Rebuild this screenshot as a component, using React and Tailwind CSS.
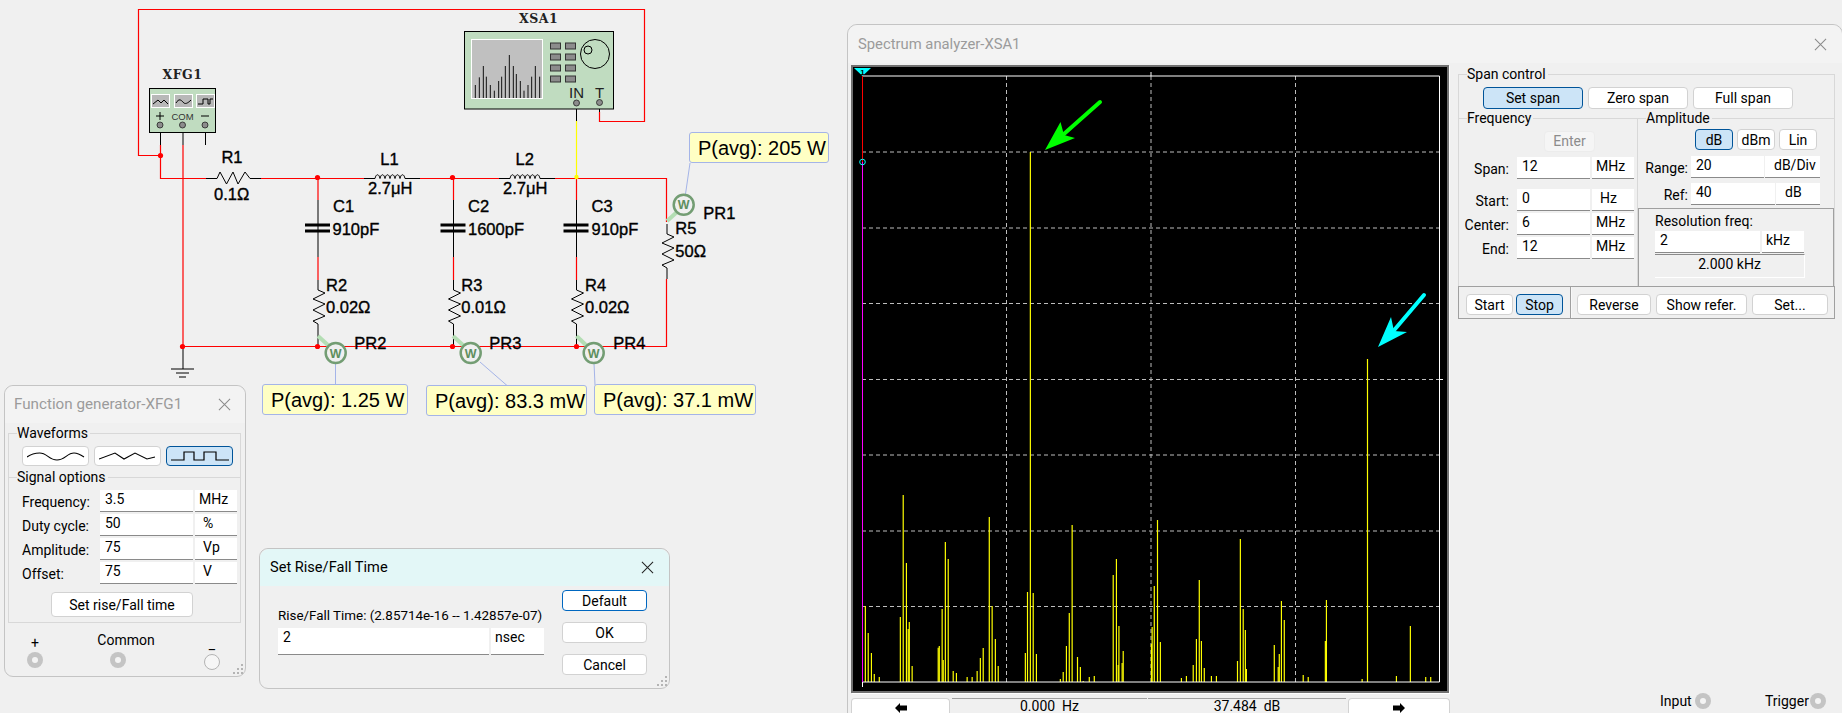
import React from "react";

function Close({ className }) {
  return (
    <svg viewBox="0 0 14 14" className={className} fill="none" stroke="currentColor" strokeWidth="1.1">
      <path d="M1 1L13 13M13 1L1 13" />
    </svg>
  );
}

function Grip() {
  return (
    <svg viewBox="0 0 11 11" className="absolute right-[1px] bottom-[1px] w-[11px] h-[11px]" fill="#b4b4b4">
      <rect x="8" y="0" width="2" height="2" />
      <rect x="4" y="4" width="2" height="2" />
      <rect x="8" y="4" width="2" height="2" />
      <rect x="0" y="8" width="2" height="2" />
      <rect x="4" y="8" width="2" height="2" />
      <rect x="8" y="8" width="2" height="2" />
    </svg>
  );
}

function Btn({ className, active, focus, children }) {
  const tone = active
    ? "bg-[#cce4f7] border-[#005499]"
    : focus
    ? "bg-white border-[#0067c0]"
    : "bg-white border-[#d2d2d2]";
  return (
    <div className={`flex items-center justify-center rounded-[4px] border text-[14px] leading-none text-black ${tone} ${className}`}>
      {children}
    </div>
  );
}

function Box({ className, children }) {
  return (
    <div className={`h-[22px] bg-white border-b border-[#8a8a8a] text-[14px] leading-[18px] text-black ${className}`}>
      {children}
    </div>
  );
}

function Legend({ className, children }) {
  return (
    <span className={`absolute -top-[9px] bg-[#f0f0f0] pr-[2px] text-[14px] leading-[17px] text-black ${className}`}>
      {children}
    </span>
  );
}

function Row({ label, value, unit, labelClass, inputClass, unitClass, unitPad = "pl-[4px]", gap = "gap-[2px]", rowClass = "" }) {
  return (
    <div className={`flex items-center ${gap} ${rowClass}`}>
      <span className={`pt-[2px] text-[14px] leading-none text-black ${labelClass}`}>{label}</span>
      <Box className={`pl-[5px] ${inputClass}`}>{value}</Box>
      <Box className={`${unitPad} ${unitClass}`}>{unit}</Box>
    </div>
  );
}

function Jack({ className = "" }) {
  return (
    <div className={`flex items-center justify-center w-[16px] h-[16px] rounded-full bg-[#c4c4c4] ${className}`}>
      <div className="w-[6px] h-[6px] rounded-full bg-[#f4f4f4]" />
    </div>
  );
}

function FunctionGenerator() {
  const rows = [
    ["Frequency:", "3.5", "MHz", "pl-[4px]"],
    ["Duty cycle:", "50", "%", "pl-[8px]"],
    ["Amplitude:", "75", "Vp", "pl-[8px]"],
    ["Offset:", "75", "V", "pl-[8px]"],
  ];
  return (
    <div className="absolute left-[4px] top-[385px] w-[242px] h-[292px] rounded-[9px] border border-[#c4c4c4] bg-[#f0f0f0]">
      <div className="flex items-center justify-between h-[37px] pl-[9px] pr-[14px] rounded-t-[9px] bg-[#f3f3f3]">
        <span className="text-[15.2px] text-[#9b9b9b]">Function generator-XFG1</span>
        <Close className="w-[13px] h-[13px] text-[#8a8a8a]" />
      </div>
      <div className="relative mt-[10px] ml-[3px] w-[233px] h-[190px] border border-[#d8d8d8]">
        <Legend className="left-[8px]">Waveforms</Legend>
        <div className="flex gap-[5px] pt-[12px] pl-[13px]">
          <Btn className="w-[67px] h-[20px]">
            <svg viewBox="0 0 58 12" className="w-[58px] h-[12px]" fill="none" stroke="#000" strokeWidth="1.1">
              <path d="M0 7C4 4 8 3 12.7 3C20 3 22 10 30 10C38 10 40 3 47 3C51 3 54 5 57 7" />
            </svg>
          </Btn>
          <Btn className="w-[67px] h-[20px]">
            <svg viewBox="0 0 58 12" className="w-[58px] h-[12px]" fill="none" stroke="#000" strokeWidth="1.1">
              <path d="M0 9L16 3L25 9L36 3L48 9L56 7" />
            </svg>
          </Btn>
          <Btn active className="w-[67px] h-[20px]">
            <svg viewBox="0 0 58 12" className="w-[58px] h-[12px]" fill="none" stroke="#000" strokeWidth="1.2">
              <path d="M0 10H13V2H23V10H33V2H45V10H58" />
            </svg>
          </Btn>
        </div>
        <div className="relative mt-[11px] border-t border-[#d8d8d8]">
          <Legend className="left-[8px]">Signal options</Legend>
        </div>
        <div className="flex flex-col gap-[2px] mt-[12px]">
          {rows.map(([l, v, u, p]) => (
            <Row key={l} label={l} value={v} unit={u} unitPad={p} labelClass="w-[89px] pl-[13px]" inputClass="w-[93px]" unitClass="w-[42px]" />
          ))}
        </div>
        <Btn className="ml-[42px] mt-[8px] w-[142px] h-[25px]">Set rise/Fall time</Btn>
      </div>
      <div className="flex items-start">
        <div className="flex flex-col items-center ml-[22px] w-[16px] pt-[11px]">
          <span className="text-[14px] leading-[18px] text-black">+</span>
          <Jack />
        </div>
        <div className="flex flex-col items-center ml-[67px] w-[16px] pt-[6px]">
          <span className="text-[14px] leading-[23px] pl-[16px] text-black whitespace-nowrap">Common</span>
          <Jack />
        </div>
        <div className="flex flex-col items-center ml-[78px] w-[16px] pt-[11px]">
          <span className="text-[14px] leading-[20px] text-black">_</span>
          <div className="w-[16px] h-[16px] rounded-full border border-[#b4b4b4] bg-[#f6f6f6]" />
        </div>
      </div>
      <Grip />
    </div>
  );
}

function RiseFall() {
  return (
    <div className="absolute left-[259px] top-[548px] w-[411px] h-[141px] rounded-[9px] border border-[#c4c4c4] bg-[#f0f0f0]">
      <div className="flex items-center justify-between h-[37px] pl-[10px] pr-[15px] rounded-t-[9px] bg-[#e3f7f7]">
        <span className="text-[14.6px] text-black">Set Rise/Fall Time</span>
        <Close className="w-[13px] h-[13px] text-[#222]" />
      </div>
      <div className="flex">
        <div className="flex flex-col pl-[18px] pt-[21px] w-[302px]">
          <span className="text-[13.4px] leading-[18px] text-black whitespace-nowrap">Rise/Fall Time: (2.85714e-16 -- 1.42857e-07)</span>
          <div className="flex gap-[2px] mt-[3px]">
            <Box className="w-[211px] h-[27px] pl-[5px]">2</Box>
            <Box className="w-[53px] h-[27px] pl-[4px]">nsec</Box>
          </div>
        </div>
        <div className="flex flex-col gap-[11px] pt-[4px]">
          <Btn focus className="w-[85px] h-[21px]">Default</Btn>
          <Btn className="w-[85px] h-[21px]">OK</Btn>
          <Btn className="w-[85px] h-[21px]">Cancel</Btn>
        </div>
      </div>
      <Grip />
    </div>
  );
}

const BARS = [
  [57, 378], [65, 459], [74, 519], [82, 582], [96, 591], [155, 411], [163, 45], [172, 249], [177, 447], [180, 426], [188, 558],
  [261, 503], [264, 498], [272, 387], [275, 540], [281, 186], [289, 237], [303, 573], [312, 579], [342, 591], [356, 591], [370, 573],
  [379, 534], [387, 504], [404, 111], [412, 378], [421, 477], [429, 558], [505, 519], [511, 336], [519, -984], [527, 339], [536, 522],
  [603, 597], [611, 576], [620, 498], [628, 399], [636, 135], [651, 531], [659, 561], [667, 603], [684, 591], [698, 588], [751, 285],
  [760, 237], [765, 555], [767, 438], [776, 549], [779, 513], [858, 492], [860, 441], [866, 318], [875, 120], [883, 486], [942, 594],
  [956, 588], [975, 555], [984, 477], [992, 300], [998, 483], [1006, 564], [1026, 588], [1040, 588], [1099, 543], [1107, 177],
  [1115, 387], [1121, 450], [1124, 567], [1202, 495], [1213, 561], [1216, 522], [1222, 363], [1230, 420], [1283, 585], [1297, 591],
  [1345, 483], [1348, 360], [1448, 597], [1463, -363], [1544, 588], [1583, 438], [1626, 591], [1640, 591],
];

function Plot() {
  const ys = [152, 228, 303.5, 379.5, 455, 531, 606.5];
  const xs = [1006.5, 1151, 1295.5];
  return (
    <div className="w-[598px] h-[628px] border-2 border-[#707070] bg-black shadow-[1px_1px_0_#ffffff]">
      <svg viewBox="853 67 594 624" className="block w-[594px] h-[624px]">
        {ys.map((y) => (
          <line key={y} x1="862" x2="1440" y1={y} y2={y} stroke="#bdbdbd" strokeDasharray="4 3" />
        ))}
        {xs.map((x) => (
          <line key={x} y1="76" y2="682" x1={x} x2={x} stroke="#bdbdbd" strokeDasharray="4 3" />
        ))}
        {BARS.map(([X, Y]) => (
          <line key={X} x1={845 + X / 2.8} x2={845 + X / 2.8} y1="682" y2={480 + Y / 3} stroke="#ffff00" strokeWidth="1.2" />
        ))}
        <path d="M862.5 76H1439.5V682H862.5V687M1151 72V76M1439.5 379.5H1443" fill="none" stroke="#fff" />
        <path d="M862.5 76V162" stroke="#ff0000" />
        <path d="M862.5 162V682" stroke="#ff00ff" />
        <circle cx="862.5" cy="162" r="2.8" fill="none" stroke="#00ffff" />
        <polygon points="854,68 871,68 862.5,76" fill="#00ffff" />
        <text x="862.5" y="75" textAnchor="middle" fontSize="8" fontWeight="700" fill="#000" fontFamily="Liberation Sans, sans-serif">1</text>
        <line x1="1100" y1="102" x2="1056" y2="141" stroke="#00ff00" strokeWidth="4" strokeLinecap="round" />
        <polygon points="1045,150 1060.5,122 1064,135 1075,138" fill="#00ff00" />
        <line x1="1424" y1="295" x2="1390" y2="335" stroke="#00ffff" strokeWidth="4" strokeLinecap="round" />
        <polygon points="1378,347 1391,317 1394,331 1407,332" fill="#00ffff" />
      </svg>
    </div>
  );
}

function Spectrum() {
  return (
    <div className="absolute left-[847px] top-[24px] w-[996px] h-[700px] rounded-[10px] border border-[#c4c4c4] bg-[#f0f0f0]">
      <div className="flex items-center justify-between h-[38px] pl-[10px] pr-[15px] rounded-t-[10px] bg-[#f3f3f3]">
        <span className="text-[14.8px] text-[#9b9b9b]">Spectrum analyzer-XSA1</span>
        <Close className="w-[13px] h-[13px] text-[#8a8a8a]" />
      </div>
      <div className="flex">
        <div className="pl-[3px] pt-[2px]">
          <Plot />
          <div className="flex mt-[5px] h-[15px] text-[14px] text-black">
            <div className="flex justify-center items-start pt-[3px] w-[99px] h-[15px] bg-white border border-b-0 border-[#d2d2d2] rounded-t-[4px]">
              <svg viewBox="0 0 12 12" className="w-[12px] h-[12px]"><path d="M0 6L5 1V3.5H12V8.5H5V11Z" fill="#000" /></svg>
            </div>
            <div className="flex justify-center w-[195px] ml-[2px] border-t border-[#a0a0a0] leading-[14px]">0.000&nbsp; Hz</div>
            <div className="flex justify-center w-[198px] ml-[1px] border-t border-[#a0a0a0] leading-[14px]">37.484&nbsp; dB</div>
            <div className="flex justify-center items-start pt-[3px] w-[102px] h-[15px] ml-[2px] bg-white border border-b-0 border-[#d2d2d2] rounded-t-[4px]">
              <svg viewBox="0 0 12 12" className="w-[12px] h-[12px]"><path d="M12 6L7 1V3.5H0V8.5H7V11Z" fill="#000" /></svg>
            </div>
          </div>
        </div>
        <div className="ml-[8px] pt-[11px] w-[377px]">
          <div className="relative h-[212px] border border-[#d8d8d8] border-b-0">
            <Legend className="left-[8px]">Span control</Legend>
            <div className="flex gap-[5px] pt-[12px] pl-[24px]">
              <Btn active className="w-[100px] h-[22px]">Set span</Btn>
              <Btn className="w-[100px] h-[22px]">Zero span</Btn>
              <Btn className="w-[100px] h-[22px]">Full span</Btn>
            </div>
            <div className="flex mt-[9px] h-[168px] border-t border-[#d8d8d8]">
              <div className="relative w-[179px] border-r border-[#d8d8d8]">
                <Legend className="left-[8px]">Frequency</Legend>
                <div className="flex justify-start pt-[12px] pl-[85px]">
                  <div className="flex items-center justify-center w-[51px] h-[21px] rounded-[4px] border border-[#ececec] bg-[#f5f5f5] text-[14px] text-[#8c8c8c]">Enter</div>
                </div>
                <Row rowClass="mt-[5px]" label="Span:" value="12" unit="MHz" labelClass="w-[56px] text-right pr-[6px]" inputClass="w-[73px]" unitClass="w-[42px]" />
                <div className="flex flex-col gap-[2px] mt-[10px]">
                  <Row label="Start:" value="0" unit="Hz" unitPad="pl-[8px]" labelClass="w-[56px] text-right pr-[6px]" inputClass="w-[73px]" unitClass="w-[42px]" />
                  <Row label="Center:" value="6" unit="MHz" labelClass="w-[56px] text-right pr-[6px]" inputClass="w-[73px]" unitClass="w-[42px]" />
                  <Row label="End:" value="12" unit="MHz" labelClass="w-[56px] text-right pr-[6px]" inputClass="w-[73px]" unitClass="w-[42px]" />
                </div>
              </div>
              <div className="relative flex flex-col flex-1">
                <Legend className="left-[8px]">Amplitude</Legend>
                <div className="flex gap-[4px] pt-[10px] pl-[57px]">
                  <Btn active className="w-[38px] h-[21px]">dB</Btn>
                  <Btn className="w-[38px] h-[21px]">dBm</Btn>
                  <Btn className="w-[38px] h-[21px]">Lin</Btn>
                </div>
                <Row rowClass="mt-[6px]" gap="gap-[1px]" label="Range:" value="20" unit="dB/Div" unitPad="pl-[9px]" labelClass="w-[52px] text-right pr-[2px]" inputClass="w-[73px]" unitClass="w-[55px]" />
                <Row rowClass="mt-[5px]" gap="gap-[1px]" label="Ref:" value="40" unit="dB" unitPad="pl-[9px]" labelClass="w-[52px] text-right pr-[2px]" inputClass="w-[84px]" unitClass="w-[44px]" />
                <div className="flex-1 mt-[3px] border border-[#a0a0a0] border-b-0 pl-[16px] pt-[3px]">
                  <div className="text-[14px] leading-[18px] text-black">Resolution freq:</div>
                  <div className="flex gap-[2px] mt-[1px]">
                    <Box className="w-[105px] pl-[5px]">2</Box>
                    <Box className="w-[42px] pl-[4px]">kHz</Box>
                  </div>
                  <div className="flex justify-center w-[150px] h-[24px] mt-[1px] border-t border-t-[#8a8a8a] border-b border-r border-b-white border-r-white text-[14px] leading-[18px] text-black">2.000 kHz</div>
                </div>
              </div>
            </div>
          </div>
          <div className="flex h-[33px] border border-[#a0a0a0]">
            <div className="flex gap-[3px] w-[112px] pt-[7px] pl-[7px] border-r border-[#a0a0a0]">
              <Btn className="w-[47px] h-[21px]">Start</Btn>
              <Btn active className="w-[47px] h-[21px]">Stop</Btn>
            </div>
            <div className="flex gap-[5px] pt-[7px] pl-[5px] border-l border-[#f8f8f8]">
              <Btn className="w-[74px] h-[21px]">Reverse</Btn>
              <Btn className="w-[91px] h-[21px]">Show refer.</Btn>
              <Btn className="w-[76px] h-[21px]">Set...</Btn>
            </div>
          </div>
          <div className="flex items-center mt-[374px] ml-[202px] text-[14px] leading-none text-black">
            <span className="w-[35px]">Input</span>
            <Jack />
            <span className="ml-[54px] w-[45px]">Trigger</span>
            <Jack />
          </div>
        </div>
      </div>
    </div>
  );
}

function Zig({ x, y, end = 66 }) {
  return (
    <path
      d={`M${x} ${y}V${y + 10}L${x + 7} ${y + 13}L${x - 5} ${y + 19}L${x + 7} ${y + 24}L${x - 5} ${y + 30}L${x + 7} ${y + 36}L${x - 5} ${y + 41}L${x} ${y + 44}V${y + end}`}
      fill="none"
      stroke="#000"
    />
  );
}

function Cap({ x }) {
  return (
    <g>
      <path d={`M${x} 200V257`} stroke="#000" fill="none" />
      <path d={`M${x - 13} 225H${x + 12}M${x - 13} 231H${x + 12}`} stroke="#000" strokeWidth="3" fill="none" />
    </g>
  );
}

function Coil({ x }) {
  return (
    <path
      d={`M${x} 178.5H${x + 11}c1-5 4-5 5 0c1-5 4-5 5 0c1-5 4-5 5 0c1-5 4-5 5 0c1-5 4-5 5 0c1-5 4-5 5 0H${x + 56}`}
      fill="none"
      stroke="#000"
    />
  );
}

function Probe({ cx, cy, tail }) {
  return (
    <g>
      <path d={tail} stroke="#b4deb4" strokeWidth="4" fill="none" />
      <circle cx={cx} cy={cy} r="10" fill="#f0f0f0" stroke="#739d73" strokeWidth="2.5" />
      <text x={cx} y={cy + 4.5} textAnchor="middle" fontSize="12.5" fontWeight="700" fill="#5f8f5f">W</text>
    </g>
  );
}

function Lbl({ x, y, children, anchor = "start" }) {
  return (
    <text x={x} y={y} textAnchor={anchor} fontSize="16.5" fill="#000" stroke="#000" strokeWidth="0.35">{children}</text>
  );
}

function Circuit() {
  const mini = [[166, 255], [178, 232], [190, 198], [199, 230], [211, 255], [223, 272], [236, 243], [245, 230], [256, 198], [268, 165], [280, 198], [289, 222], [301, 243], [312, 272], [324, 255], [335, 230], [346, 198], [359, 230]];
  const keysY = [43, 54, 65, 76];
  return (
    <svg viewBox="0 0 846 713" className="absolute left-0 top-0 w-[846px] h-[713px]" fontFamily="Liberation Sans, sans-serif">
      <g fill="none" stroke="#ff0000" strokeWidth="1">
        <path d="M160.5 155.5H138.5V9.5H644.5V121.5H599.5V112" strokeWidth="1.2" />
        <path d="M160.5 145V178.5H206M261 178.5H364M420 178.5H499M555 178.5H666.5V222M183 145V346.5M183 346.5H666.5V279" strokeWidth="1.2" />
        <path d="M318 178.5V200M453.5 178.5V200M576.5 178.5V200M318 257V280M453.5 257V280M576.5 257V280" strokeWidth="1.2" />
      </g>
      <path d="M576.5 103V121" stroke="#000" />
      <path d="M576.5 121V178" stroke="#ffff00" strokeWidth="1.2" />
      <path d="M160.5 125V145M183 125V145M205.5 125V145M183 346.5V369M599.5 103V112" stroke="#000" fill="none" />
      <path d="M171 369H194M176 373H189M179 377H186" stroke="#000" fill="none" />
      <path d="M206 178.5H217L220 172L226.5 184L233 172L238 184L245 172L250 178.5H261" fill="none" stroke="#000" />
      <Coil x={364} />
      <Coil x={499} />
      <Cap x={318} />
      <Cap x={453.5} />
      <Cap x={576.5} />
      <Zig x={318} y={280} />
      <Zig x={453.5} y={280} />
      <Zig x={576.5} y={280} />
      <Zig x={667} y={224} end={55} />

      <g fill="#ff0000">
        <circle cx="160.5" cy="155.5" r="2.6" />
        <circle cx="317.5" cy="177.5" r="2.6" />
        <circle cx="452.5" cy="177.5" r="2.6" />
        <circle cx="182.5" cy="346.5" r="2.6" />
        <circle cx="317.5" cy="346.5" r="2.6" />
        <circle cx="452.5" cy="346.5" r="2.6" />
        <circle cx="576.5" cy="346.5" r="2.6" />
      </g>
      <circle cx="576.5" cy="177" r="2.2" fill="#ffff00" />

      <g>
        <rect x="149.5" y="88.5" width="66" height="44" fill="#c0dcc0" stroke="#000" />
        <g fill="#b8b8b8" stroke="#fff">
          <rect x="151.5" y="94.5" width="18" height="13" />
          <rect x="174.5" y="94.5" width="18" height="13" />
          <rect x="196.5" y="94.5" width="18" height="13" />
        </g>
        <g fill="none" stroke="#000">
          <path d="M153 104L158 100L161 103L164 100L168 104" />
          <path d="M176 103C179 98 181 100 183 102C185 105 188 103 191 100" />
          <path d="M198 104H203V99H208V104H210V99H213" />
          <path d="M156 116H164M160 112V120M201 116H209" />
        </g>
        <text x="182.5" y="120" textAnchor="middle" fontSize="9.5" fill="#333">COM</text>
        <g fill="#8c8c8c" stroke="#222" strokeWidth="0.8">
          <circle cx="160" cy="125" r="3" />
          <circle cx="182.5" cy="125" r="3" />
          <circle cx="205" cy="125" r="3" />
        </g>
        <text x="162.5" y="78.5" fontSize="12.5" fontWeight="700" letterSpacing="0.5" fontFamily="DejaVu Serif, serif" fill="#222">XFG1</text>
      </g>

      <g>
        <rect x="464.5" y="31.5" width="149" height="77.5" fill="#c0dcc0" stroke="#000" />
        <rect x="471.5" y="39.5" width="71" height="59" fill="#c0c0c0" stroke="#fff" />
        {mini.map(([x, y]) => (
          <line key={x} x1={420 + x / 3} x2={420 + x / 3} y1="98" y2={y / 3} stroke="#111" />
        ))}
        <g fill="#8c8c8c" stroke="#333">
          {keysY.map((y) => (
            <g key={y}>
              <rect x="550.5" y={y} width="10" height="6" />
              <rect x="565.5" y={y} width="10" height="6" />
            </g>
          ))}
        </g>
        <circle cx="595" cy="54" r="14.5" fill="none" stroke="#000" />
        <circle cx="588" cy="50" r="4" fill="none" stroke="#000" />
        <text x="576.5" y="98" textAnchor="middle" fontSize="15" fill="#222">IN</text>
        <text x="599.5" y="98" textAnchor="middle" fontSize="15" fill="#222">T</text>
        <g fill="#8c8c8c" stroke="#222" strokeWidth="0.8">
          <circle cx="576.5" cy="103" r="3" />
          <circle cx="599.5" cy="102.5" r="3" />
        </g>
        <text x="519" y="22.5" fontSize="12.5" fontWeight="700" letterSpacing="0.5" fontFamily="DejaVu Serif, serif" fill="#222">XSA1</text>
      </g>

      <path d="M685.5 194L690 163M335.5 363V385M480 362L507 385.5M594 363L595 385" stroke="#a4b4e8" fill="none" />
      <Probe cx={683.7} cy={204.7} tail="M667 221L677 212" />
      <Probe cx={335.7} cy={353} tail="M318 336L329 346" />
      <Probe cx={470.7} cy={353} tail="M453 336L464 346" />
      <Probe cx={593.7} cy={353} tail="M576.5 336L587 346" />

      <Lbl x={232} y={163} anchor="middle">R1</Lbl>
      <Lbl x={214} y={199.5}>0.1Ω</Lbl>
      <Lbl x={389.5} y={165} anchor="middle">L1</Lbl>
      <Lbl x={368} y={194}>2.7μH</Lbl>
      <Lbl x={524.7} y={165} anchor="middle">L2</Lbl>
      <Lbl x={503} y={194}>2.7μH</Lbl>
      <Lbl x={333} y={212}>C1</Lbl>
      <Lbl x={332.5} y={234.7}>910pF</Lbl>
      <Lbl x={468} y={212}>C2</Lbl>
      <Lbl x={468} y={234.7}>1600pF</Lbl>
      <Lbl x={591.5} y={212}>C3</Lbl>
      <Lbl x={591.5} y={234.7}>910pF</Lbl>
      <Lbl x={326} y={291}>R2</Lbl>
      <Lbl x={326} y={313}>0.02Ω</Lbl>
      <Lbl x={461.3} y={291}>R3</Lbl>
      <Lbl x={461.3} y={313}>0.01Ω</Lbl>
      <Lbl x={585} y={291}>R4</Lbl>
      <Lbl x={585} y={313}>0.02Ω</Lbl>
      <Lbl x={675.3} y={234.3}>R5</Lbl>
      <Lbl x={675.3} y={256.7}>50Ω</Lbl>
      <Lbl x={703.3} y={218.7}>PR1</Lbl>
      <Lbl x={354.3} y={349.3}>PR2</Lbl>
      <Lbl x={489.3} y={349.3}>PR3</Lbl>
      <Lbl x={613.3} y={349.3}>PR4</Lbl>
    </svg>
  );
}

function Readout({ className, children }) {
  return (
    <div className={`absolute flex items-center pl-[8px] h-[31px] rounded-[3px] border border-[#a4b4e8] bg-[#ffffc4] text-[20px] leading-none text-black font-['Liberation_Sans',sans-serif] whitespace-nowrap ${className}`}>
      {children}
    </div>
  );
}

export default function App() {
  return (
    <div className="relative w-[1842px] h-[713px] overflow-hidden bg-[#f0f0f0] font-['Roboto',sans-serif]">
      <Circuit />
      <Readout className="left-[689px] top-[132px] w-[140px]">P(avg): 205 W</Readout>
      <Readout className="left-[262px] top-[384px] w-[146px]">P(avg): 1.25 W</Readout>
      <Readout className="left-[426px] top-[385px] w-[161px]">P(avg): 83.3 mW</Readout>
      <Readout className="left-[594px] top-[384px] w-[162px]">P(avg): 37.1 mW</Readout>
      <FunctionGenerator />
      <RiseFall />
      <Spectrum />
    </div>
  );
}
